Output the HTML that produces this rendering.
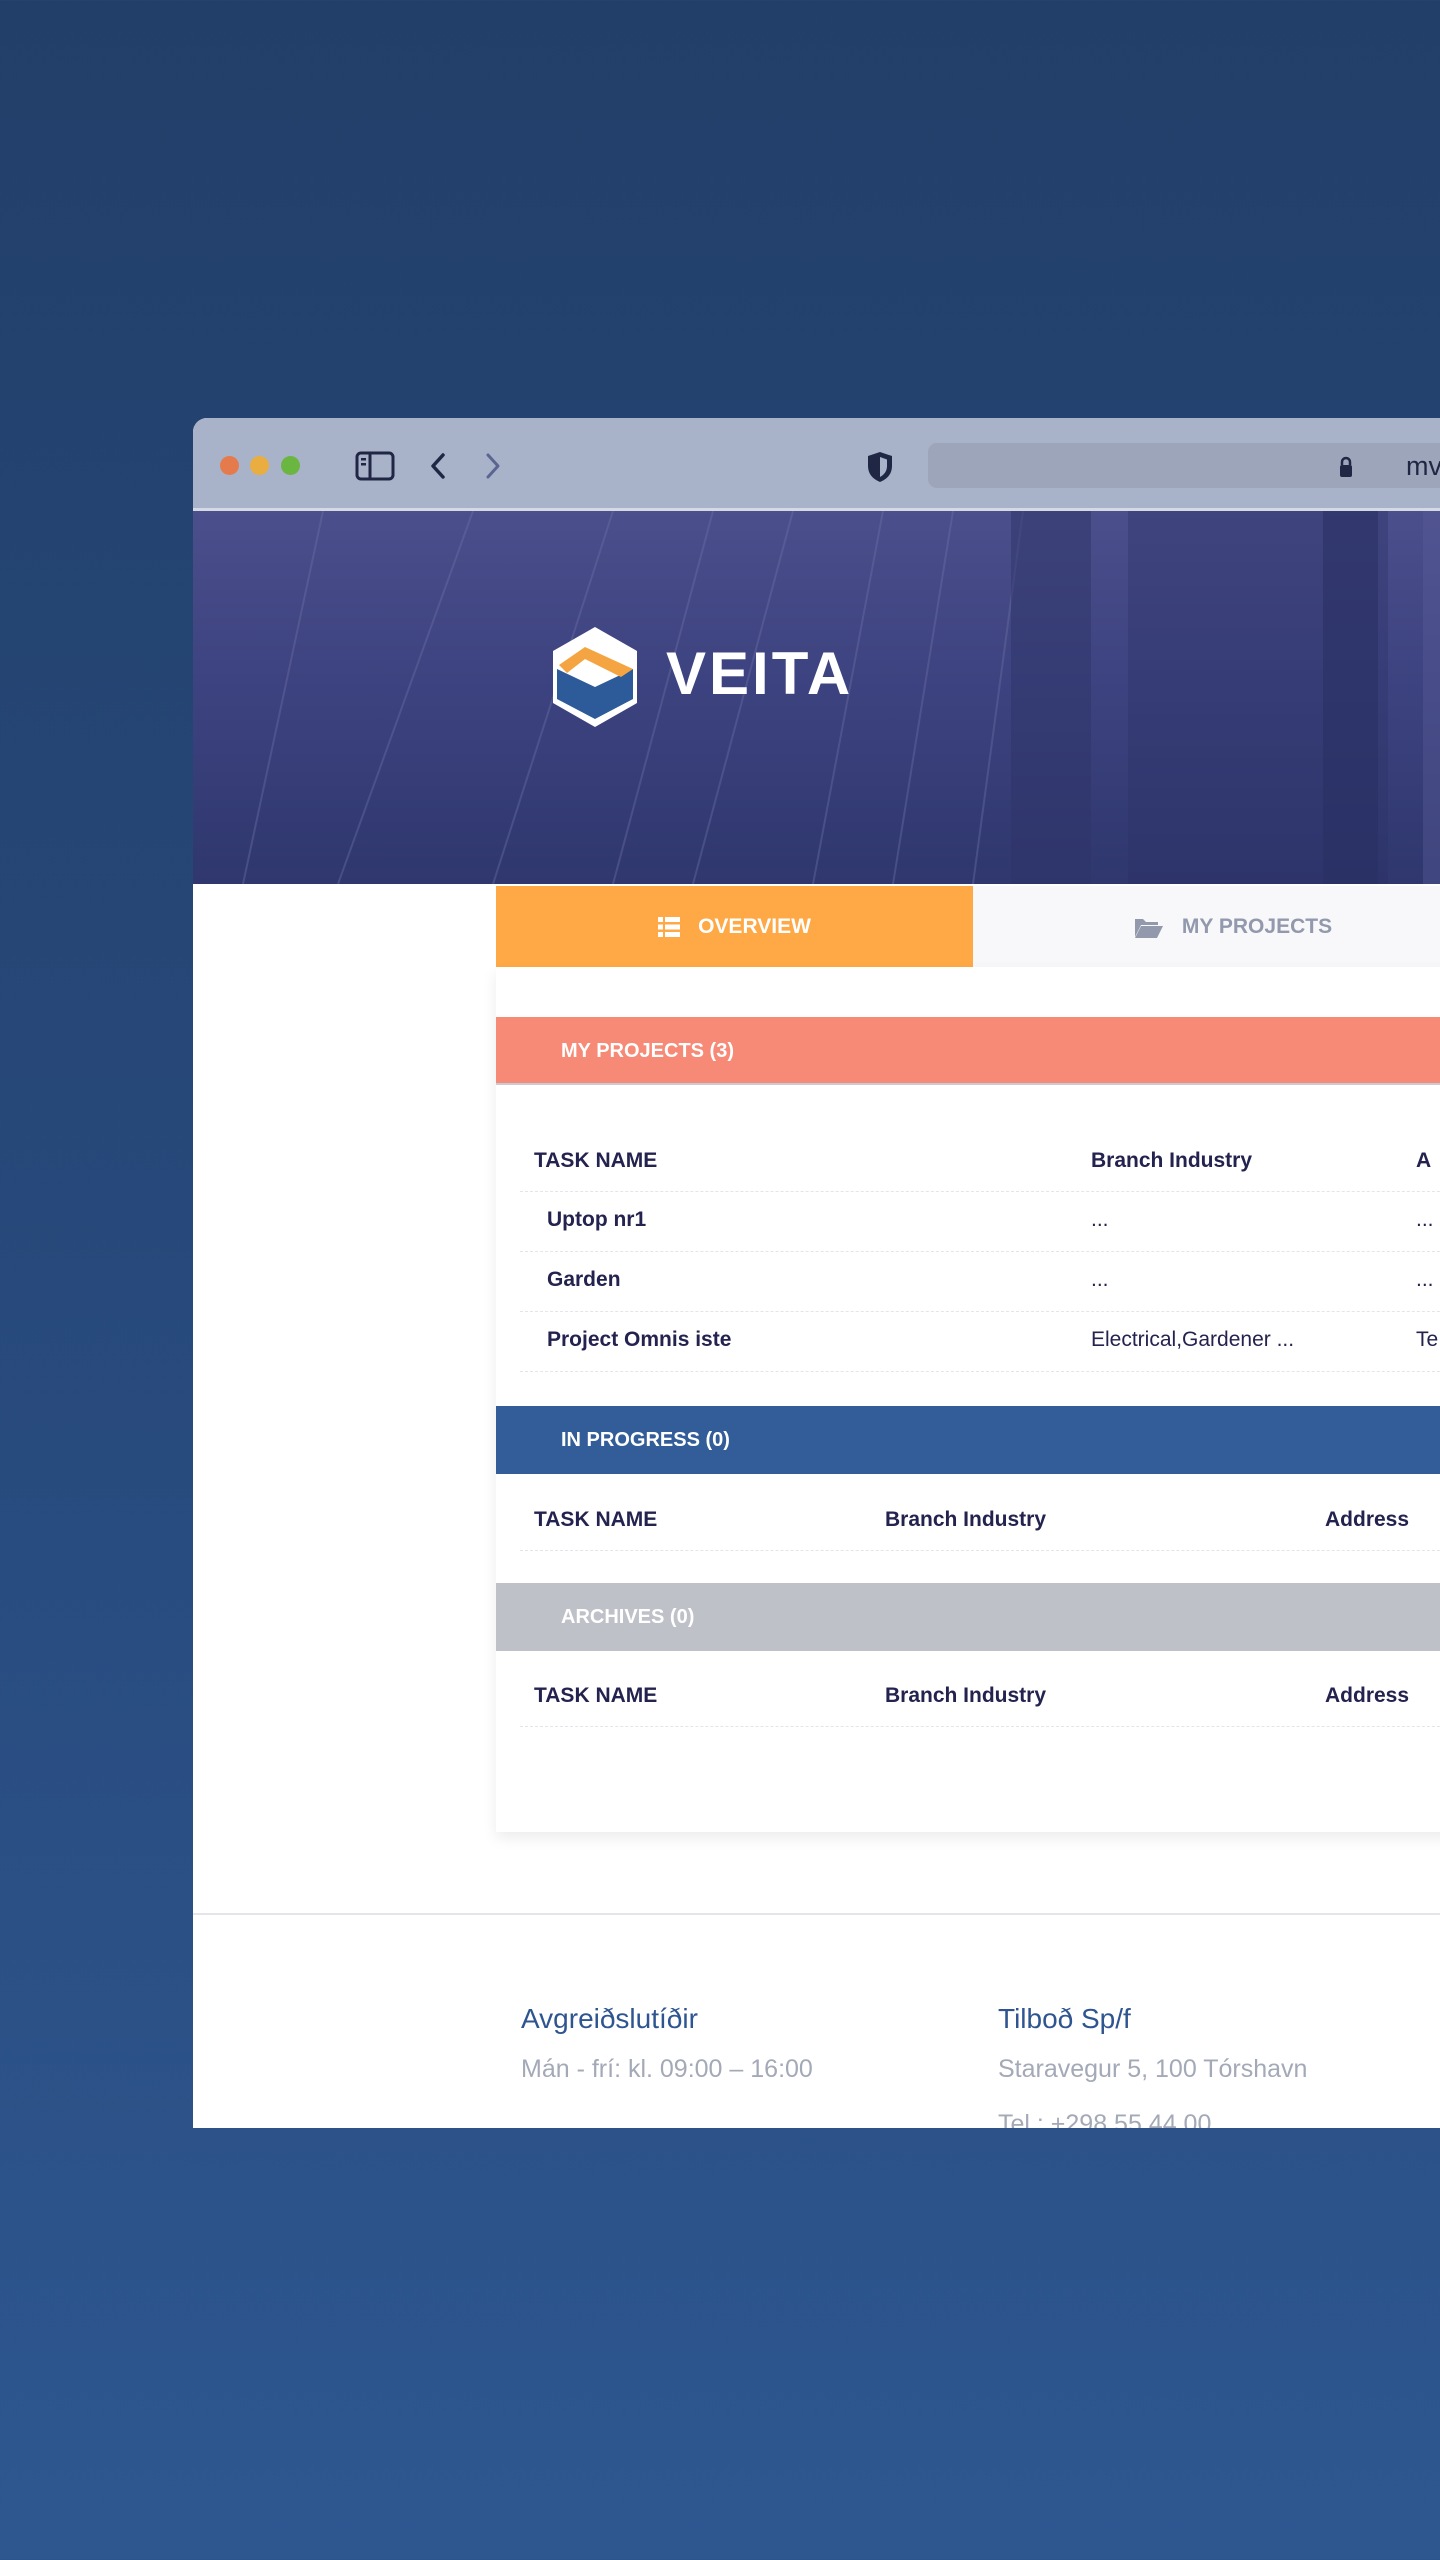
<!DOCTYPE html>
<html><head><meta charset="utf-8"><style>
*{margin:0;padding:0;box-sizing:border-box}
body{width:1440px;height:2560px;overflow:hidden;background:linear-gradient(180deg,#223f69 0%,#27497b 50%,#2e5790 100%);font-family:"Liberation Sans",Arial,sans-serif;position:relative}
.win{position:absolute;left:193px;top:418px;width:1300px;height:1710px;background:#fff;border-radius:14px 0 0 0;overflow:hidden}
.bar{position:absolute;left:0;top:0;width:100%;height:93px;background:#a8b2c8;border-bottom:3px solid #d4d9e3}
.dot{position:absolute;top:38px;width:19px;height:19px;border-radius:50%}
.url{position:absolute;left:735px;top:25px;width:600px;height:45px;background:#9ca5b9;border-radius:9px}
.hero{position:absolute;left:0;top:93px;width:100%;height:373px;background:linear-gradient(180deg,#4b4f8c 0%,#3d4380 45%,#2f376e 100%);overflow:hidden}
.tabs{position:absolute;left:303px;top:468px;width:1000px;height:81px;background:#f8f8fb}
.tab1{position:absolute;left:0;top:0;width:477px;height:81px;background:#fea846;color:#fff;font-weight:bold;font-size:21px;display:flex;align-items:center;justify-content:center;gap:18px}
.tab2{position:absolute;left:477px;top:0;width:520px;height:81px;color:#9299ad;font-weight:bold;font-size:21px;display:flex;align-items:center;justify-content:center;gap:18px}
.card{position:absolute;left:303px;top:549px;width:1000px;height:865px;background:#fff;box-shadow:0 6px 14px rgba(0,0,0,.08)}
.sec{position:absolute;left:0;width:100%;height:68px;color:#fff;font-weight:bold;font-size:20px;padding-left:65px;line-height:68px}
.th{position:absolute;font-weight:bold;font-size:21px;color:#24224f}
.td{position:absolute;font-size:21px;color:#24224f}
.b{font-weight:bold}
.line{position:absolute;left:24px;width:980px;border-top:1px dashed #e4e4ea}
.ft1{position:absolute;font-size:28px;color:#2f5590}
.ft2{position:absolute;font-size:25px;color:#a3a9b6}
</style></head><body>
<div class="win">
 <div class="bar">
  <div class="dot" style="left:27px;background:#e57b4c"></div>
  <div class="dot" style="left:57px;background:#e9ae3f"></div>
  <div class="dot" style="left:88px;background:#6bb641"></div>
  <svg style="position:absolute;left:162px;top:33px" width="40" height="30" viewBox="0 0 40 30"><rect x="2" y="2" width="36" height="26" rx="4" fill="none" stroke="#1f2745" stroke-width="3"/><line x1="15" y1="2" x2="15" y2="28" stroke="#1f2745" stroke-width="3"/><rect x="6" y="7" width="5" height="2.5" fill="#1f2745"/><rect x="6" y="12" width="5" height="2.5" fill="#1f2745"/></svg>
  <svg style="position:absolute;left:235px;top:34px" width="20" height="28"><path d="M15 3 L5 14 L15 25" fill="none" stroke="#1f2745" stroke-width="3.5" stroke-linecap="round" stroke-linejoin="round"/></svg>
  <svg style="position:absolute;left:290px;top:34px" width="20" height="28"><path d="M5 3 L15 14 L5 25" fill="none" stroke="#5a6591" stroke-width="3" stroke-linecap="round" stroke-linejoin="round"/></svg>
  <svg style="position:absolute;left:672px;top:32px" width="30" height="34" viewBox="0 0 30 34"><path d="M15 2 L27 6 L27 16 Q27 27 15 32 Q3 27 3 16 L3 6 Z" fill="#1f2745"/><path d="M15 7 L22 9.5 L22 16 Q22 23 15 27 Z" fill="#a8b2c8"/></svg>
  <div class="url"></div>
  <svg style="position:absolute;left:1145px;top:37px" width="16" height="24"><path d="M4 10 V7 a4 4 0 0 1 8 0 V10" fill="none" stroke="#1f2745" stroke-width="2.5"/><rect x="2" y="10" width="12" height="12" rx="2" fill="#1f2745"/></svg>
  <div style="position:absolute;left:1213px;top:33px;font-size:27px;color:#1f2745">mv</div>
 </div>
 <div class="hero">
  <svg width="1300" height="373" style="position:absolute;left:0;top:0">
   <g stroke="#6d70a8" stroke-width="2" opacity=".4">
    <line x1="130" y1="0" x2="50" y2="373"/><line x1="280" y1="0" x2="145" y2="373"/>
    <line x1="420" y1="0" x2="300" y2="373"/><line x1="520" y1="0" x2="420" y2="373"/>
    <line x1="600" y1="0" x2="500" y2="373"/><line x1="690" y1="0" x2="620" y2="373"/>
    <line x1="760" y1="0" x2="700" y2="373"/><line x1="830" y1="0" x2="780" y2="373"/>
   </g>
   <rect x="818" y="0" width="80" height="373" fill="#2d3468" opacity=".5"/>
   <rect x="935" y="0" width="260" height="373" fill="#2a3165" opacity=".35"/>
   <rect x="1130" y="0" width="55" height="373" fill="#262d5f" opacity=".5"/>
   <rect x="1230" y="0" width="70" height="373" fill="#5a5d98" opacity=".4"/>
  </svg>
  <svg style="position:absolute;left:356px;top:114px" width="92" height="104" viewBox="0 0 92 104">
   <path d="M46 2 L88 26 L88 78 L46 102 L4 78 L4 26 Z" fill="#fff"/>
   <path d="M8 44 L46 62 L84 44 L84 74 L46 94 L8 74 Z" fill="#2d5a99"/>
   <path d="M10 40 L36 22 L84 44 L72 52 L36 34 L18 48 Z" fill="#f4a440"/>
  </svg>
  <div style="position:absolute;left:473px;top:128px;font-size:60px;font-weight:bold;color:#fff;letter-spacing:3px">VEITA</div>
 </div>
 <div class="tabs">
  <div class="tab1"><svg width="22" height="22"><g fill="#fff"><rect x="0" y="1" width="5" height="5"/><rect x="7" y="1" width="15" height="5"/><rect x="0" y="8.5" width="5" height="5"/><rect x="7" y="8.5" width="15" height="5"/><rect x="0" y="16" width="5" height="5"/><rect x="7" y="16" width="15" height="5"/></g></svg>OVERVIEW</div>
  <div class="tab2"><svg width="30" height="24"><path d="M1 4 h8 l3 3 h12 v3 H7 L1 22 Z" fill="#9299ad"/><path d="M7 11 H29 L23 23 H1 Z" fill="#9299ad"/></svg>MY PROJECTS</div>
 </div>
 <div class="card">
  <div class="sec" style="top:50px;background:#f78a77;border-bottom:2px solid #c9ccd6">MY PROJECTS (3)</div>
  <div class="th" style="left:38px;top:182px;">TASK NAME</div>
  <div class="th" style="left:595px;top:182px">Branch Industry</div>
  <div class="th" style="left:920px;top:182px">A</div>
  <div class="line" style="top:224px"></div>
  <div class="td b" style="left:51px;top:241px">Uptop nr1</div><div class="td" style="left:595px;top:241px">...</div><div class="td" style="left:920px;top:241px">...</div>
  <div class="line" style="top:284px"></div>
  <div class="td b" style="left:51px;top:301px">Garden</div><div class="td" style="left:595px;top:301px">...</div><div class="td" style="left:920px;top:301px">...</div>
  <div class="line" style="top:344px"></div>
  <div class="td b" style="left:51px;top:361px">Project Omnis iste</div><div class="td" style="left:595px;top:361px">Electrical,Gardener ...</div><div class="td" style="left:920px;top:361px">Te</div>
  <div class="line" style="top:404px"></div>
  <div class="sec" style="top:439px;background:#325d98">IN PROGRESS (0)</div>
  <div class="th" style="left:38px;top:541px">TASK NAME</div>
  <div class="th" style="left:389px;top:541px">Branch Industry</div>
  <div class="th" style="left:829px;top:541px">Address</div>
  <div class="line" style="top:583px"></div>
  <div class="sec" style="top:616px;background:#bfc1c8">ARCHIVES (0)</div>
  <div class="th" style="left:38px;top:717px">TASK NAME</div>
  <div class="th" style="left:389px;top:717px">Branch Industry</div>
  <div class="th" style="left:829px;top:717px">Address</div>
  <div class="line" style="top:759px"></div>
 </div>
 <div style="position:absolute;left:0;top:1495px;width:100%;border-top:2px solid #e3e5ea"></div>
 <div class="ft1" style="left:328px;top:1585px">Avgreiðslutíðir</div>
 <div class="ft2" style="left:328px;top:1637px">Mán - frí: kl. 09:00 – 16:00</div>
 <div class="ft1" style="left:805px;top:1585px">Tilboð Sp/f</div>
 <div class="ft2" style="left:805px;top:1637px">Staravegur 5, 100 Tórshavn</div>
 <div class="ft2" style="left:805px;top:1692px">Tel.: +298 55 44 00</div>
</div>
</body></html>
